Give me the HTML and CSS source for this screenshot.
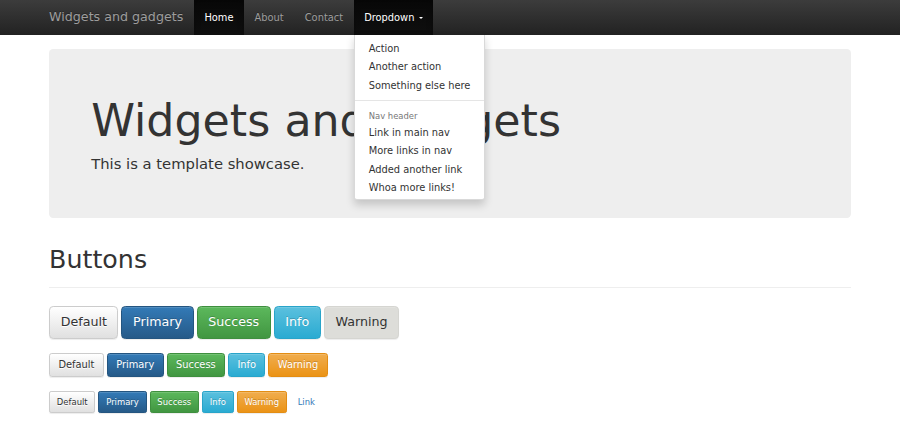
FILE: index.html
```html
<!DOCTYPE html>
<html lang="en">
<head>
<meta charset="utf-8">
<title>Widgets and gadgets</title>
<link rel="stylesheet" href="styles.css">
</head>
<body>
<nav class="navbar">
  <div class="container navbar-inner">
    <a class="brand" href="#">Widgets and gadgets</a>
    <ul class="nav">
      <li class="nav-item active"><a href="#">Home</a></li>
      <li class="nav-item"><a href="#">About</a></li>
      <li class="nav-item"><a href="#">Contact</a></li>
      <li class="nav-item active dropdown">
        <a href="#">Dropdown <span class="caret"></span></a>
        <ul class="dropdown-menu">
          <li><a href="#">Action</a></li>
          <li><a href="#">Another action</a></li>
          <li><a href="#">Something else here</a></li>
          <li class="divider"></li>
          <li class="dropdown-header">Nav header</li>
          <li><a href="#">Link in main nav</a></li>
          <li><a href="#">More links in nav</a></li>
          <li><a href="#">Added another link</a></li>
          <li><a href="#">Whoa more links!</a></li>
        </ul>
      </li>
    </ul>
  </div>
</nav>

<main class="container showcase">
  <section class="jumbotron">
    <h1>Widgets and gadgets</h1>
    <p>This is a template showcase.</p>
  </section>

  <div class="page-header">
    <h1>Buttons</h1>
  </div>

  <div class="btn-row">
    <button class="btn btn-lg btn-default">Default</button>
    <button class="btn btn-lg btn-primary">Primary</button>
    <button class="btn btn-lg btn-success">Success</button>
    <button class="btn btn-lg btn-info">Info</button>
    <button class="btn btn-lg btn-muted">Warning</button>
  </div>
  <div class="btn-row">
    <button class="btn btn-default">Default</button>
    <button class="btn btn-primary">Primary</button>
    <button class="btn btn-success">Success</button>
    <button class="btn btn-info">Info</button>
    <button class="btn btn-warning">Warning</button>
  </div>
  <div class="btn-row">
    <button class="btn btn-sm btn-default">Default</button>
    <button class="btn btn-sm btn-primary">Primary</button>
    <button class="btn btn-sm btn-success">Success</button>
    <button class="btn btn-sm btn-info">Info</button>
    <button class="btn btn-sm btn-warning">Warning</button>
    <button class="btn btn-sm btn-link">Link</button>
  </div>
</main>
</body>
</html>
```

FILE: styles.css
```css
* { box-sizing: border-box; }

html, body {
  margin: 0;
  padding: 0;
  background: #fff;
}

body {
  font-family: "DejaVu Sans", "Helvetica Neue", Helvetica, Arial, sans-serif;
  font-size: 9.85px;
  line-height: 14.07px;
  color: #333;
}

a { text-decoration: none; }

.container {
  width: 823px;
  margin: 0 auto;
  padding: 0 10.55px;
}

/* ---------- navbar ---------- */
.navbar {
  height: 35px;
  background: linear-gradient(to bottom, #3c3c3c 0, #222 100%);
}

.navbar-inner {
  display: flex;
  align-items: stretch;
  height: 35px;
}

.brand {
  margin-left: -10.55px;
  padding: 10px 10.55px;
  font-size: 12.66px;
  line-height: 14.07px;
  color: #9d9d9d;
  text-shadow: 0 -1px 0 rgba(0,0,0,.25);
  white-space: nowrap;
}

.nav {
  display: flex;
  list-style: none;
  margin: 0;
  padding: 0;
}

.nav-item {
  position: relative;
}

.nav-item > a {
  display: block;
  height: 35px;
  padding: 10.5px 10.55px;
  line-height: 14.07px;
  color: #9d9d9d;
  text-shadow: 0 -1px 0 rgba(0,0,0,.25);
  white-space: nowrap;
}

.nav-item.active > a {
  color: #fff;
  background: linear-gradient(to bottom, #080808 0, #0f0f0f 100%);
  box-shadow: inset 0 2px 6px rgba(0,0,0,.25);
}

.caret {
  display: inline-block;
  width: 0;
  height: 0;
  margin-left: 1.4px;
  vertical-align: middle;
  border-top: 2.8px solid #fff;
  border-left: 2.8px solid transparent;
  border-right: 2.8px solid transparent;
}

.dropdown-menu {
  position: absolute;
  top: 100%;
  left: 0;
  z-index: 10;
  margin: 0;
  padding: 5px 0 2px;
  list-style: none;
  background: #fff;
  border: 1px solid rgba(0,0,0,.15);
  border-top-width: 0;
  border-radius: 0 0 2.8px 2.8px;
  box-shadow: 0 4.2px 8.4px rgba(0,0,0,.175);
  min-width: 112px;
}

.dropdown-menu li > a {
  display: block;
  padding: 2.11px 14.07px;
  line-height: 14.07px;
  color: #333;
  white-space: nowrap;
}

.dropdown-menu .divider {
  height: 1px;
  margin: 5.5px 0;
  background: #e5e5e5;
}

.dropdown-menu .dropdown-header {
  padding: 2.11px 14.07px 1px;
  font-size: 8.44px;
  line-height: 14.07px;
  color: #777;
  white-space: nowrap;
}

/* ---------- jumbotron ---------- */
.showcase {
  padding-top: 14px;
}

.jumbotron {
  background: #eee;
  border-radius: 4.2px;
  padding: 33.77px 42.2px;
}

.jumbotron h1 {
  margin: 14.07px 0 7.03px;
  font-size: 44.3px;
  line-height: 48.73px;
  font-weight: 500;
  color: #333;
}

.jumbotron p {
  margin: 0 0 10.55px;
  font-size: 14.77px;
  line-height: 21.1px;
  font-weight: 400;
}

/* ---------- page header ---------- */
.page-header {
  margin: 28.14px 0 14.07px;
  padding-bottom: 6.33px;
  border-bottom: 1px solid #eee;
}

.page-header h1 {
  margin: 0 0 7.03px;
  font-size: 25.33px;
  line-height: 27.86px;
  font-weight: 500;
}

/* ---------- buttons ---------- */
.btn-row {
  display: flex;
  align-items: flex-start;
  gap: 3px;
  margin-bottom: 7.03px;
}

.btn {
  display: inline-block;
  margin: 3.52px 0;
  padding: 4.22px 8.4px;
  font-family: inherit;
  font-size: 9.85px;
  line-height: 14.07px;
  font-weight: 400;
  border: 1px solid transparent;
  border-radius: 2.8px;
  white-space: nowrap;
  cursor: pointer;
  color: #fff;
  text-shadow: 0 -1px 0 rgba(0,0,0,.2);
  box-shadow: inset 0 1px 0 rgba(255,255,255,.15), 0 1px 1px rgba(0,0,0,.075);
}

.btn-lg {
  padding: 7.03px 10.6px;
  font-size: 12.66px;
  line-height: 16.88px;
  border-radius: 4.2px;
}

.btn-sm {
  padding: 3.52px 6.8px;
  font-size: 8.44px;
  line-height: 12.66px;
  border-radius: 2.1px;
}

.btn-default {
  color: #333;
  text-shadow: 0 1px 0 #fff;
  background: linear-gradient(to bottom, #fff 0, #e0e0e0 100%);
  border-color: #ccc;
}

.btn-primary {
  background: linear-gradient(to bottom, #337ab7 0, #265a88 100%);
  border-color: #245580;
}

.btn-success {
  background: linear-gradient(to bottom, #5cb85c 0, #419641 100%);
  border-color: #3e8f3e;
}

.btn-info {
  background: linear-gradient(to bottom, #5bc0de 0, #2aabd2 100%);
  border-color: #28a4c9;
}

.btn-warning {
  background: linear-gradient(to bottom, #f0ad4e 0, #eb9316 100%);
  border-color: #e38d13;
}

.btn-muted {
  color: #333;
  text-shadow: none;
  background: #ddddd9;
  border-color: #d5d5d1;
}

.btn-link {
  color: #337ab7;
  background: transparent;
  border-color: transparent;
  text-shadow: none;
  box-shadow: none;
}
```
